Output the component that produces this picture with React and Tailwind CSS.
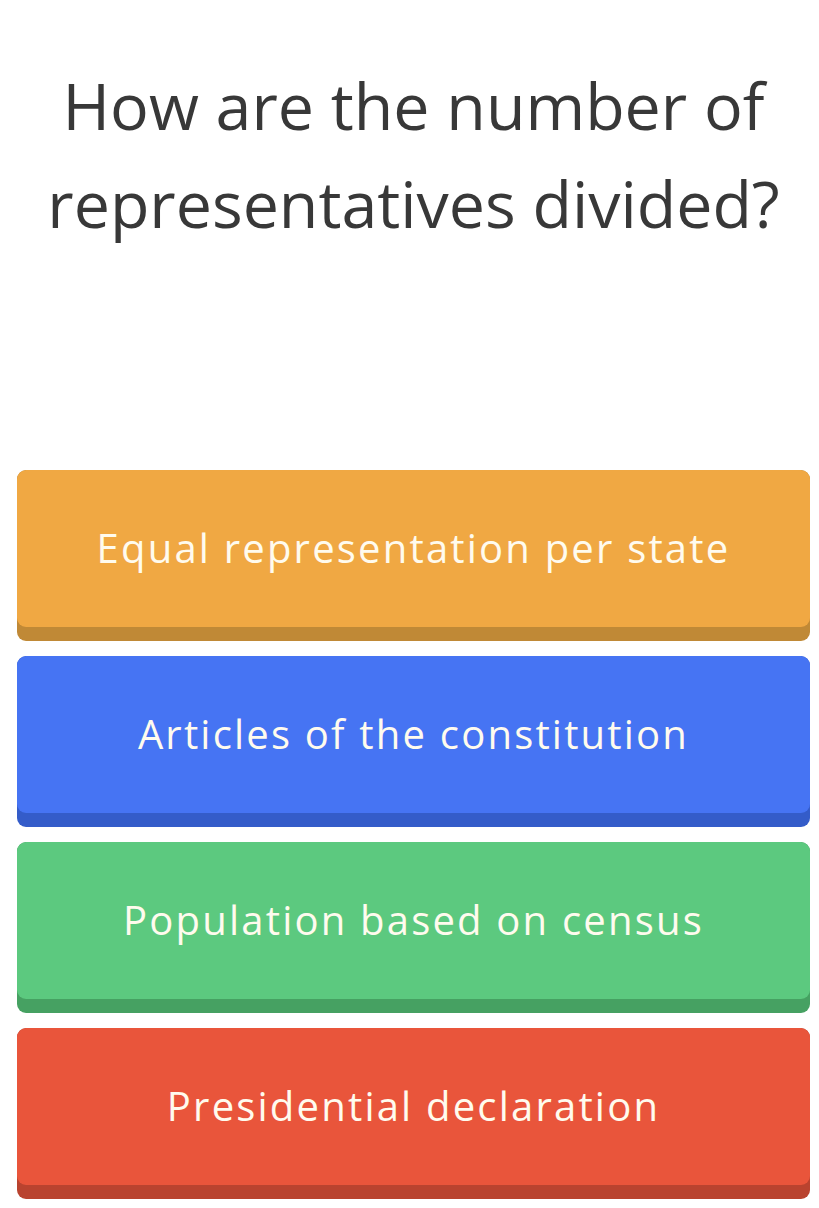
const answers = [
  { label: "Equal representation per state", face: "bg-[#f0a843]", edge: "bg-[#c08936]" },
  { label: "Articles of the constitution", face: "bg-[#4674f3]", edge: "bg-[#345cc9]" },
  { label: "Population based on census", face: "bg-[#5cc97f]", edge: "bg-[#46a162]" },
  { label: "Presidential declaration", face: "bg-[#e9553b]", edge: "bg-[#b9432f]" },
];

export default function App() {
  return (
    <div
      className="min-h-[1208px] w-[819px] bg-white pl-[17px] pr-[9px]"
      style={{ fontFamily: "'Open Sans', 'Noto Sans', sans-serif" }}
    >
      <h1 className="pt-[56px] text-center text-[64.5px] leading-[98px] font-normal text-[#383838]">
        How are the number of representatives divided?
      </h1>

      <div className="mt-[218px] flex flex-col gap-[15px]">
        {answers.map((a) => (
          <button key={a.label} className={`flex h-[171px] flex-col overflow-hidden rounded-[9px] ${a.edge}`}>
            <div className={`flex h-[157px] items-center justify-center rounded-[9px] pb-[1px] ${a.face}`}>
              <span className="text-[40px] tracking-[2.2px] text-[#fffbee]">{a.label}</span>
            </div>
          </button>
        ))}
      </div>
    </div>
  );
}
